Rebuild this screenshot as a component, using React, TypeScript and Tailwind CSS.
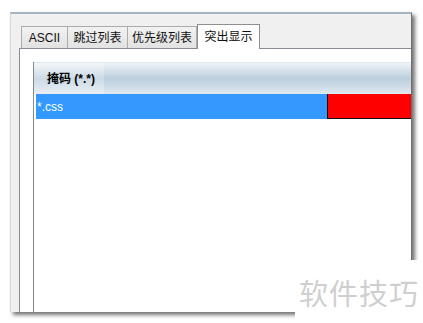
import React from 'react';

const font = {fontFamily: '"Liberation Sans", "Noto Sans CJK SC", sans-serif'};

export default function App() {
	const tabs = [
		{label: 'ASCII', w: 'w-[47px]'},
		{label: '跳过列表', w: 'w-[61px]'},
		{label: '优先级列表', w: 'w-[70px]'},
	];

	return (
		<div className="relative w-[423px] h-[323px] bg-white overflow-hidden text-[12px] text-black" style={font}>
			<div className="pl-[10px] pt-[12px]">
				{/* window */}
				<div className="w-[402px] h-[300px] bg-[#f0f0f0] border-t-2 border-t-[#a7b4c2] border-l border-l-[#d6d6d6] border-r border-r-[#6d6d6d] shadow-[3px_3px_4px_rgba(0,0,0,0.55)] overflow-hidden flex flex-col">
					{/* tabs */}
					<div className="flex items-end h-[34px] pl-[10px] shrink-0">
						{tabs.map((t) => (
							<div
								key={t.label}
								className={`${t.w} h-[22px] flex items-center justify-center border border-[#acacac] border-b-0 -ml-px first:ml-0 bg-gradient-to-b from-[#f2f2f2] to-[#e2e2e2] text-[#111] leading-none`}
							>
								{t.label}
							</div>
						))}
						<div className="w-[63px] h-[25px] flex items-center justify-center border border-[#8f8f8f] border-b-0 bg-white -mb-px relative z-10 leading-none text-[#111]">
							突出显示
						</div>
					</div>
					{/* panel */}
					<div className="flex-1 ml-[8px] bg-white border-t border-l border-[#898c95] pl-[13px] pt-[13px] w-[420px]">
						<div className="h-full border-l border-[#828790] flex flex-col">
							<div className="h-[32px] flex border-t border-[#dfe7ee] bg-gradient-to-b from-[#eef3f7] via-[#bccfdd] to-[#dfe8ef] shrink-0">
								<div className="w-[70px] flex items-center pl-[13px] font-bold bg-gradient-to-b from-[#f4f7fa] via-[#cbdae5] to-[#e8eef3]">
									掩码 (*.*)
								</div>
							</div>
							<div className="h-[25px] flex ml-[2px] shrink-0">
								<div className="w-[291px] bg-[#3399ff] text-white flex items-center pl-[1px]">*.css</div>
								<div className="flex-1 bg-[#ff0000] border-l border-b border-[#111]"></div>
							</div>
						</div>
					</div>
				</div>
			</div>
			{/* watermark */}
			<div className="absolute left-[295px] top-[260px] w-[128px] h-[63px] bg-white flex items-center justify-center pt-[1px]">
				<span className="text-[29px] text-[#cfcfcf] tracking-[1px] leading-none" style={{fontFamily: '"Noto Sans CJK SC", sans-serif'}}>软件技巧</span>
			</div>
		</div>
	);
}
